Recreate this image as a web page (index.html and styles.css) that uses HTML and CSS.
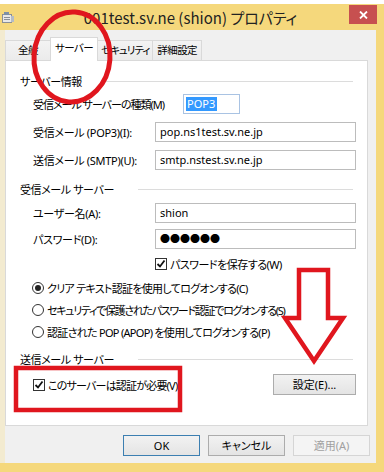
FILE: index.html
```html
<!DOCTYPE html>
<html lang="ja">
<head>
    <meta charset="UTF-8">
    <meta name="viewport" content="width=device-width, initial-scale=1.0">
    <title>001test.sv.ne (shion) プロパティ</title>
    <link rel="stylesheet" href="styles.css">
</head>
<body>
    <div class="window">
        <div class="titlebar">
            <svg class="app-icon" width="12" height="13" viewBox="0 0 12 13">
                <rect x="0.5" y="3.5" width="9" height="8" fill="#e8e8e8" stroke="#8a8f98"/>
                <rect x="2" y="1" width="5" height="3" fill="#7d8fa6"/>
                <rect x="2" y="6" width="6" height="1" fill="#8a8f98"/>
                <rect x="2" y="8" width="6" height="1" fill="#8a8f98"/>
                <rect x="9" y="5" width="3" height="6" fill="#b5bcc6"/>
            </svg>
            <div class="title">001test.sv.ne (shion) プロパティ</div>
            <div class="close">
                <svg width="9" height="8" viewBox="0 0 9 8">
                    <path d="M1 0.5 L8 7.5 M8 0.5 L1 7.5" stroke="#fff" stroke-width="1.8"/>
                </svg>
            </div>
        </div>

        <div class="client">
            <div class="tabs">
                <div class="tab">全般</div>
                <div class="tab active">サーバー</div>
                <div class="tab">セキュリティ</div>
                <div class="tab">詳細設定</div>
            </div>

            <div class="panel">
                <div class="group-title"><span>サーバー情報</span><div class="rule"></div></div>
                <div class="row first">
                    <span class="label wide">受信メール サーバーの種類(M)</span>
                    <div class="field short"><span class="selected">POP3</span></div>
                </div>
                <div class="row">
                    <span class="label">受信メール (POP3)(I):</span>
                    <div class="field">pop.ns1test.sv.ne.jp</div>
                </div>
                <div class="row">
                    <span class="label">送信メール (SMTP)(U):</span>
                    <div class="field">smtp.nstest.sv.ne.jp</div>
                </div>

                <div class="group-title gap-big"><span>受信メール サーバー</span><div class="rule"></div></div>
                <div class="row tight">
                    <span class="label">ユーザー名(A):</span>
                    <div class="field">shion</div>
                </div>
                <div class="row tight">
                    <span class="label">パスワード(D):</span>
                    <div class="field"><span class="dots">●●●●●●</span></div>
                </div>
                <div class="check-row save">
                    <span class="check">
                        <svg width="10" height="10" viewBox="0 0 10 10"><path d="M1.5 5 L4 7.5 L8.5 1.5" fill="none" stroke="#111" stroke-width="1.8"/></svg>
                    </span>
                    <span class="save-text">パスワードを保存する(W)</span>
                </div>
                <div class="radios">
                    <div class="radio-row"><span class="radio on"></span><span>クリア テキスト認証を使用してログオンする(C)</span></div>
                    <div class="radio-row narrow"><span class="radio"></span><span>セキュリティで保護されたパスワード認証でログオンする(S)</span></div>
                    <div class="radio-row"><span class="radio"></span><span>認証された POP (APOP) を使用してログオンする(P)</span></div>
                </div>

                <div class="group-title gap-mid"><span>送信メール サーバー</span><div class="rule"></div></div>
                <div class="row auth">
                    <span class="check">
                        <svg width="10" height="10" viewBox="0 0 10 10"><path d="M1.5 5 L4 7.5 L8.5 1.5" fill="none" stroke="#111" stroke-width="1.8"/></svg>
                    </span>
                    <span class="auth-text">このサーバーは認証が必要(V)</span>
                    <button class="btn settings">設定(E)...</button>
                </div>
            </div>

            <div class="buttons">
                <button class="btn default">OK</button>
                <button class="btn">キャンセル</button>
                <button class="btn disabled">適用(A)</button>
            </div>
        </div>
    </div>

    <!-- red markup drawn over the screenshot -->
    <svg class="marks" width="384" height="472" viewBox="0 0 384 472">
        <ellipse cx="72" cy="57" rx="38" ry="45" transform="rotate(4 72 57)" fill="none" stroke="#e0161e" stroke-width="5"/>
        <polygon points="299,270 328,270 328,318 343,318 314,361 285,318 299,318" fill="none" stroke="#e0161e" stroke-width="4.5" stroke-linejoin="miter"/>
        <rect x="16" y="368" width="164" height="42" fill="none" stroke="#e0161e" stroke-width="4.5"/>
    </svg>
</body>
</html>
```

FILE: styles.css
```css
body {
    margin: 0;
    background-color: #ffffff;
    font-family: "Noto Sans", "Noto Sans CJK JP", sans-serif;
    font-size: 11px;
    font-feature-settings: "palt";
    color: #000000;
    position: relative;
}

.window {
    margin-top: 4px;
    background-color: #f5d87c;
    padding: 0 8px 9px 0;
}

/* title bar */
.titlebar {
    height: 26px;
    display: flex;
    align-items: center;
}

.app-icon {
    margin-left: 2px;
    flex: none;
}

.title {
    flex: 1;
    text-align: center;
    font-family: "Noto Sans CJK JP", sans-serif;
    font-size: 15px;
    color: #222222;
    padding-left: 18px;
    white-space: nowrap;
}

.close {
    align-self: flex-start;
    margin-top: 1px;
    margin-right: -1px;
    width: 28px;
    height: 19px;
    background-color: #c75050;
    display: flex;
    align-items: center;
    justify-content: center;
}

/* client area */
.client {
    background-color: #f0f0f0;
    border-left: 5px solid #f3ebd0;
    padding: 7px 6px 7px 0;
}

.tabs {
    display: flex;
    align-items: flex-end;
    height: 23px;
}

.tab {
    min-width: 45px;
    height: 20px;
    box-sizing: border-box;
    border: 1px solid #d9d9d9;
    border-bottom: none;
    border-right: none;
    background: linear-gradient(#f3f3f3, #ebebeb);
    padding: 0 4px;
    text-align: center;
    font-size: 10.5px;
    letter-spacing: -0.6px;
    line-height: 19px;
    white-space: nowrap;
}

.tab:nth-child(3) {
    letter-spacing: -1px;
    padding: 0 3px;
}

.tab:nth-child(4) {
    border-right: 1px solid #d9d9d9;
}

.tab.active {
    height: 24px;
    margin-bottom: -1px;
    background: #ffffff;
    line-height: 21px;
    border-right: 1px solid #d9d9d9;
    position: relative;
    z-index: 1;
}

.tab.active + .tab {
    border-left: none;
}

.panel {
    height: 366px;
    box-sizing: border-box;
    margin-right: 2px;
    background-color: #ffffff;
    border: 1px solid #d9d9d9;
    padding: 12px 14px 0 14px;
}

.group-title {
    display: flex;
    align-items: center;
    height: 16px;
    white-space: nowrap;
}

.group-title span {
    letter-spacing: -0.4px;
}

.group-title .rule {
    flex: 1;
    height: 1px;
    background-color: #dcdcdc;
    margin-left: 24px;
}

.gap-big {
    margin-top: 11px;
}

.gap-mid {
    margin-top: 8px;
}

.row {
    display: flex;
    align-items: center;
    height: 20px;
    padding-left: 13px;
    margin-top: 8px;
    white-space: nowrap;
}

.row.first {
    margin-top: 5px;
}

.row.tight {
    margin-top: 6px;
}

.label {
    width: 122px;
    flex: none;
    letter-spacing: -0.3px;
}

.label.wide {
    width: 150px;
    letter-spacing: -1px;
}

.field {
    width: 201px;
    height: 20px;
    box-sizing: border-box;
    flex: none;
    border: 1px solid #bcbcbc;
    background-color: #ffffff;
    padding-left: 4px;
    line-height: 18px;
}

.field.short {
    width: 57px;
    border-color: #a9c3e3;
    padding: 2px 0 0 2px;
    line-height: 14px;
    letter-spacing: 0;
}

.selected {
    display: inline-block;
    background-color: #3399ff;
    color: #ffffff;
    padding: 0 2px 0 1px;
    height: 14px;
}

.dots {
    font-family: "Noto Sans CJK JP", sans-serif;
    font-size: 10px;
}

.check-row {
    display: flex;
    align-items: center;
    height: 16px;
    white-space: nowrap;
}

.check-row.save {
    margin-top: 7px;
    padding-left: 135px;
}

.save-text {
    letter-spacing: -0.5px;
}

.check {
    width: 12px;
    height: 12px;
    box-sizing: border-box;
    border: 1px solid #333333;
    background-color: #ffffff;
    display: flex;
    align-items: center;
    justify-content: center;
    margin-right: 3px;
    flex: none;
}

.radios {
    margin-top: 5px;
}

.radio-row {
    display: flex;
    align-items: center;
    height: 22px;
    padding-left: 12px;
    white-space: nowrap;
    letter-spacing: -0.7px;
}

.radio-row.narrow {
    letter-spacing: -1.3px;
}

.radio {
    width: 12px;
    height: 12px;
    box-sizing: border-box;
    border: 1px solid #333333;
    border-radius: 50%;
    background-color: #ffffff;
    margin-right: 3px;
    flex: none;
    display: flex;
    align-items: center;
    justify-content: center;
}

.radio.on::after {
    content: "";
    width: 6px;
    height: 6px;
    border-radius: 50%;
    background-color: #222222;
}

.row.auth {
    height: 21px;
    margin-top: 7px;
}

.auth-text {
    flex: 1;
    letter-spacing: -0.8px;
}

/* buttons */
.btn {
    height: 21px;
    box-sizing: border-box;
    border: 1px solid #acacac;
    background: linear-gradient(#f2f2f2, #e4e4e4);
    font-family: "Noto Sans", "Noto Sans CJK JP", sans-serif;
    font-size: 11px;
    font-feature-settings: "palt";
    color: #000000;
    padding: 0;
    line-height: 19px;
    cursor: pointer;
}

.btn.settings {
    width: 83px;
    margin-right: -3px;
}

.buttons {
    display: flex;
    justify-content: flex-end;
    gap: 8px;
    margin-top: 9px;
}

.buttons .btn {
    width: 77px;
}

.btn.default {
    border-color: #3c7fb1;
}

.btn.disabled {
    background: #f4f4f4;
    border-color: #d5d5d5;
    color: #a0a0a0;
}

.marks {
    position: absolute;
    top: 0;
    left: 0;
    pointer-events: none;
}
```
